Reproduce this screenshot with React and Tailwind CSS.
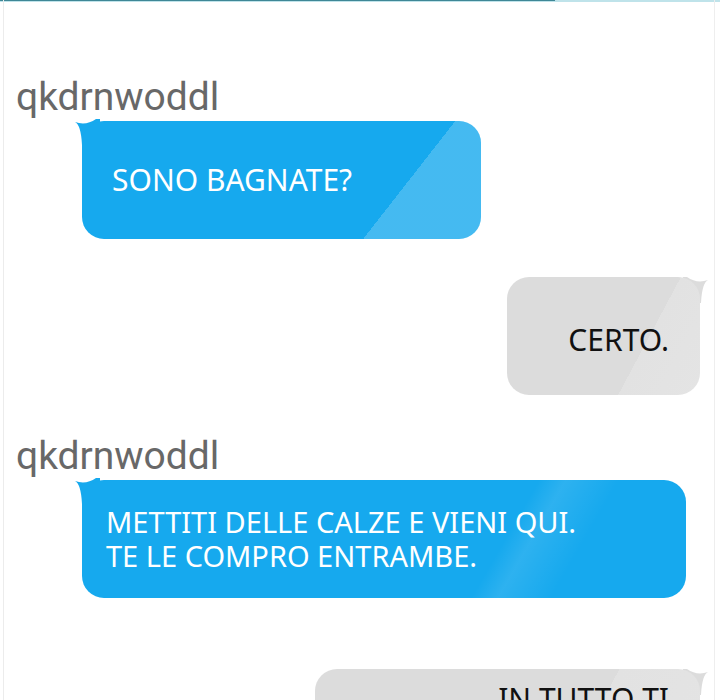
import React from 'react';

const blue = '#16a9ee';
const gray = '#dcdcdc';

const Username = ({ className = '' }) => (
  <div
    className={`pl-[16px] text-[39px] leading-none text-[#686868] ${className}`}
    style={{ fontFamily: 'Roboto, "Noto Sans", sans-serif' }}
  >
    qkdrnwoddl
  </div>
);

const LeftTail = () => (
  <svg className="absolute left-[-8px] top-[-2px]" width="26" height="26" viewBox="0 0 26 26">
    <path d="M1 3 Q7 6 8 26 L26 26 L26 0 L22 0 Q12 7 1 3 Z" fill={blue} />
  </svg>
);

const RightTail = () => (
  <svg className="absolute right-[-9px] top-[0px]" width="26" height="26" viewBox="0 0 26 26">
    <path d="M25 3 Q19 6 18 26 L0 26 L0 0 L4 0 Q14 7 25 3 Z" fill={gray} />
  </svg>
);

const BlueBubble = ({ width, pad, size, children, stripe }) => (
  <div className="relative ml-[82px] h-[118px]" style={{ width }}>
    <LeftTail />
    <div
      className="relative h-full rounded-[22px] overflow-hidden flex items-center text-white leading-[34px]"
      style={{ backgroundColor: blue, paddingLeft: pad, fontSize: size, fontFamily: '"Noto Sans", sans-serif' }}
    >
      <div className="absolute inset-0" style={{ background: stripe }} />
      <div className="relative">{children}</div>
    </div>
  </div>
);

const GrayBubble = ({ left, width, children, className = '' }) => (
  <div className={`relative h-[118px] ${className}`} style={{ marginLeft: left, width }}>
    <RightTail />
    <div
      className="relative h-full rounded-[22px] overflow-hidden flex justify-end pr-[31px] text-[#111111] text-[30px] leading-[35px]"
      style={{
        background: `linear-gradient(118deg, ${gray} 0%, ${gray} 68%, #e2e2e2 68%, #e4e4e4 100%)`,
        fontFamily: '"Noto Sans", sans-serif',
      }}
    >
      {children}
    </div>
  </div>
);

export default function App() {
  return (
    <div className="relative w-[720px] h-[700px] overflow-hidden bg-white">
      <div className="h-[2px] w-full bg-[#bfe3ea]">
        <div className="h-[1px] w-[555px] bg-[#3f8796]" />
      </div>
      <div className="absolute left-[3px] top-0 bottom-0 w-px bg-[#ececec]" />
      <div className="absolute right-[5px] top-0 bottom-0 w-px bg-[#eeeeee]" />

      <div className="flex flex-col">
        <Username className="mt-[76px] mb-[4px]" />
        <BlueBubble
          width={399}
          pad={30}
          size={30}
          stripe="linear-gradient(128deg, transparent 0%, transparent 76%, rgba(255,255,255,0.2) 76%, rgba(255,255,255,0.2) 100%)"
        >
          SONO BAGNATE?
        </BlueBubble>

        <GrayBubble left={507} width={193} className="mt-[38px]">
          <div className="self-center pt-[6px]">CERTO.</div>
        </GrayBubble>

        <Username className="mt-[42px] mb-[4px]" />
        <BlueBubble
          width={604}
          pad={24}
          size={29}
          stripe="linear-gradient(120deg, transparent 0%, transparent 68%, rgba(255,255,255,0.1) 72%, transparent 80%)"
        >
          <div>METTITI DELLE CALZE E VIENI QUI.</div>
          <div>TE LE COMPRO ENTRAMBE.</div>
        </BlueBubble>

        <GrayBubble left={315} width={385} className="mt-[71px]">
          <div className="pt-[12px]">IN TUTTO TI</div>
        </GrayBubble>
      </div>
    </div>
  );
}
